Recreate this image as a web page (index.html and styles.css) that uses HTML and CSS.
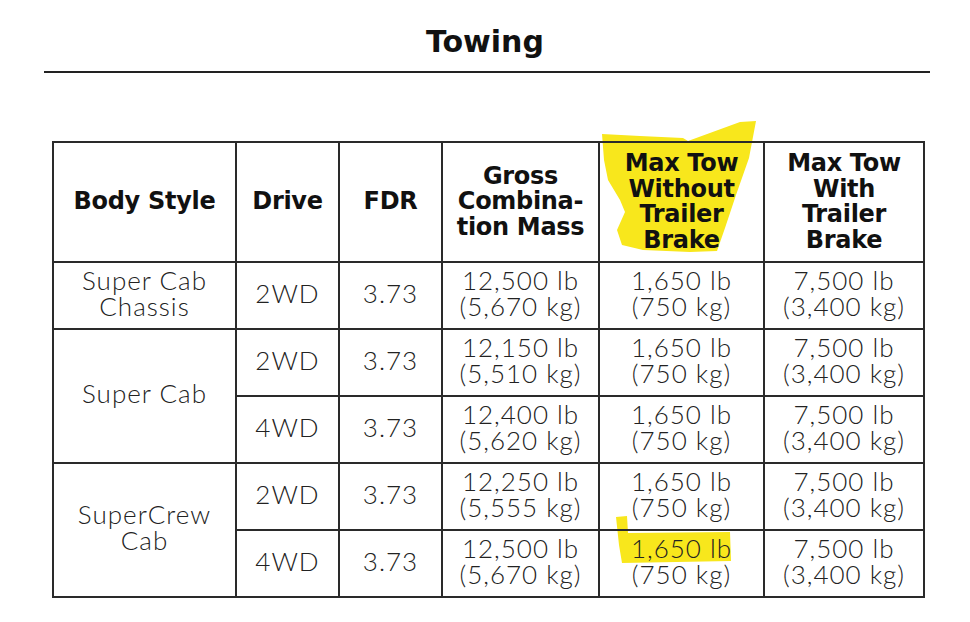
FILE: index.html
```html
<!DOCTYPE html>
<html>
<head>
<meta charset="utf-8">
<link rel="stylesheet" href="styles.css">
</head>
<body>
<div class="page">
  <h1 class="title">Towing</h1>
  <div class="rule"></div>
  <svg class="hl" width="970" height="622" viewBox="0 0 970 622">
    <path d="M602 134 L640 136 L683 138 L688 141 L740 122 L756 121 L749 158 L736 195 L725 228 L717 251 L690 252 L643 250 L622 245 L617 230 L625 212 L620 200 L608 180 L604 160 Z" fill="#f8e71c"/>
    <path d="M616 517 L627 516 L628 533 L730 532 L731 561 L622 563 L619 545 Z" fill="#f8e71c"/>
  </svg>
  <table class="tow">
    <colgroup>
      <col class="c1"><col class="c2"><col class="c3"><col class="c4"><col class="c5"><col class="c6">
    </colgroup>
    <thead>
      <tr>
        <th>Body Style</th>
        <th>Drive</th>
        <th>FDR</th>
        <th>Gross<br>Combina-<br>tion Mass</th>
        <th>Max Tow<br>Without<br>Trailer<br>Brake</th>
        <th>Max Tow<br>With<br>Trailer<br>Brake</th>
      </tr>
    </thead>
    <tbody>
      <tr>
        <td>Super Cab<br>Chassis</td>
        <td>2WD</td>
        <td>3.73</td>
        <td>12,500 lb<br>(5,670 kg)</td>
        <td>1,650 lb<br>(750 kg)</td>
        <td>7,500 lb<br>(3,400 kg)</td>
      </tr>
      <tr>
        <td rowspan="2">Super Cab</td>
        <td>2WD</td>
        <td>3.73</td>
        <td>12,150 lb<br>(5,510 kg)</td>
        <td>1,650 lb<br>(750 kg)</td>
        <td>7,500 lb<br>(3,400 kg)</td>
      </tr>
      <tr>
        <td>4WD</td>
        <td>3.73</td>
        <td>12,400 lb<br>(5,620 kg)</td>
        <td>1,650 lb<br>(750 kg)</td>
        <td>7,500 lb<br>(3,400 kg)</td>
      </tr>
      <tr>
        <td rowspan="2">SuperCrew<br>Cab</td>
        <td>2WD</td>
        <td>3.73</td>
        <td>12,250 lb<br>(5,555 kg)</td>
        <td>1,650 lb<br>(750 kg)</td>
        <td>7,500 lb<br>(3,400 kg)</td>
      </tr>
      <tr>
        <td>4WD</td>
        <td>3.73</td>
        <td>12,500 lb<br>(5,670 kg)</td>
        <td>1,650 lb<br>(750 kg)</td>
        <td>7,500 lb<br>(3,400 kg)</td>
      </tr>
    </tbody>
  </table>
</div>
</body>
</html>
```
FILE: styles.css
```css
html, body {
  margin: 0;
  padding: 0;
  background: #fff;
}
.page {
  position: relative;
  width: 970px;
  height: 622px;
  font-family: "Lato", "Liberation Sans", sans-serif;
  color: #1e1e1e;
}
.title {
  margin: 0;
  padding-top: 24px;
  height: 46px;
  box-sizing: content-box;
  font-family: "DejaVu Sans", sans-serif;
  font-size: 30px;
  line-height: 36px;
  font-weight: 700;
  text-align: center;
  color: #111;
}
.rule {
  margin: 1px 40px 0 44px;
  height: 2px;
  background: #222;
}
.hl {
  position: absolute;
  left: 0;
  top: 0;
  pointer-events: none;
}
.tow {
  position: relative;
  margin: 68px 0 0 52px;
  width: 872px;
  border-collapse: collapse;
  table-layout: fixed;
}
.c1 { width: 183px; }
.c2 { width: 103px; }
.c3 { width: 103px; }
.c4 { width: 157px; }
.c5 { width: 165px; }
.c6 { width: 160px; }
.tow th, .tow td {
  border: 2px solid #2a2a2a;
  text-align: center;
  vertical-align: middle;
  padding: 0;
}
.tow th {
  height: 118px;
  font-family: "DejaVu Sans", sans-serif;
  font-size: 24px;
  line-height: 25.5px;
  font-weight: 700;
  color: #111;
  letter-spacing: -0.3px;
}
.tow td {
  height: 59px;
  padding-bottom: 6px;
  font-size: 26px;
  line-height: 26px;
  font-weight: 300;
  letter-spacing: 1px;
  color: #222;
}
```
